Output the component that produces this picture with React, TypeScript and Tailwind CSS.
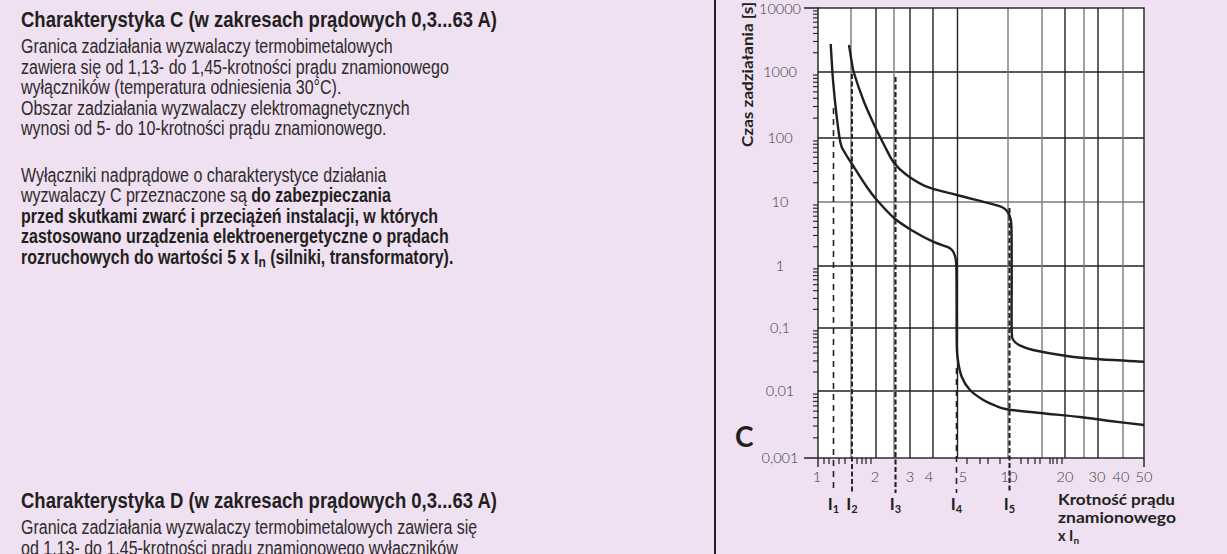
import React from "react";

type P = [number, number];

function smooth(pts: P[]): string {
  let d = `M${pts[0][0]},${pts[0][1]}`;
  for (let i = 0; i < pts.length - 1; i++) {
    const p0 = pts[i - 1] || pts[i];
    const p1 = pts[i];
    const p2 = pts[i + 1];
    const p3 = pts[i + 2] || p2;
    const c1x = p1[0] + (p2[0] - p0[0]) / 6;
    const c1y = p1[1] + (p2[1] - p0[1]) / 6;
    const c2x = p2[0] - (p3[0] - p1[0]) / 6;
    const c2y = p2[1] - (p3[1] - p1[1]) / 6;
    d += ` C${c1x.toFixed(2)},${c1y.toFixed(2)} ${c2x.toFixed(2)},${c2y.toFixed(2)} ${p2[0]},${p2[1]}`;
  }
  return d;
}

const X0 = 818;
const X1 = 1144;
const Y0 = 8;
const Y1 = 458;
const DECADES = [8, 72, 138, 202, 266, 328, 391, 458];
const YLABELS = ["10000", "1000", "100", "10", "1", "0,1", "0,01", "0,001"];
const INK = "#231f20";
const GRAY = "#7a7a7a";

const vGrid: { x: number; c: string }[] = [
  { x: 851, c: GRAY },
  { x: 876, c: INK },
  { x: 894, c: GRAY },
  { x: 910, c: INK },
  { x: 933, c: INK },
  { x: 957.5, c: INK },
  { x: 1008, c: GRAY },
  { x: 1042, c: GRAY },
  { x: 1065, c: INK },
  { x: 1084, c: GRAY },
  { x: 1098, c: INK },
  { x: 1123, c: GRAY },
];

const xTicks = [824, 829, 839, 845, 857, 862, 866, 871, 967, 980, 988, 1000, 1021, 1028, 1035, 1040, 1050, 1053, 1057, 1062];

const xLabels: [string, number][] = [
  ["1", 817],
  ["2", 875],
  ["3", 910],
  ["4", 929],
  ["5", 963],
  ["10", 1009],
  ["20", 1065],
  ["30", 1097],
  ["40", 1121],
  ["50", 1144],
];

const curveA: P[] = [
  [830.7, 44], [833, 80], [836.5, 115], [840.5, 143], [845, 153], [852, 164], [866.7, 186.7], [876, 199],
  [894, 218], [913, 231], [933, 241.7], [946.7, 246.7], [952, 250], [955, 256], [956.3, 266], [956.6, 300],
  [956.7, 340], [957.6, 358], [961.7, 376.7], [970, 390], [983.3, 400], [995, 405.5], [1006.7, 409.3],
  [1040, 413], [1080, 417], [1110, 421], [1144, 425],
];

const curveB: P[] = [
  [849, 45], [851.7, 61.7], [854, 73], [863.3, 100], [873.3, 123], [885, 146.7], [894.3, 163.3], [906.7, 175],
  [926.7, 186.7], [956.7, 195], [986.7, 202.7], [1001.7, 207], [1007, 211], [1010.3, 218], [1011.5, 230],
  [1011.7, 280], [1011.7, 330], [1013.3, 340], [1020, 345.5], [1033, 350], [1066.7, 356], [1100, 359.3], [1144, 361.7],
];

const dashes: { x: number; y: number; w: number; da: string; n: string }[] = [
  { x: 833.5, y: 108, w: 1.6, da: "6 5", n: "1" },
  { x: 852, y: 74, w: 1.9, da: "5 2.5", n: "2" },
  { x: 895.5, y: 77, w: 2.1, da: "5 2.5", n: "3" },
  { x: 956.5, y: 368, w: 1.6, da: "6 5", n: "4" },
  { x: 1009.5, y: 208, w: 2.1, da: "5 2.5", n: "5" },
];

const FONT = "Lato, 'DejaVu Sans', sans-serif";

function Chart() {
  const minorY: number[] = [];
  for (let i = 0; i < DECADES.length - 1; i++) {
    const top = DECADES[i];
    const bot = DECADES[i + 1];
    for (let m = 2; m <= 9; m++) minorY.push(bot - Math.log10(m) * (bot - top));
  }
  return (
    <svg width={511} height={554} viewBox="716 0 511 554" className="block shrink-0">
      <rect x={X0} y={Y0} width={X1 - X0} height={Y1 - Y0} fill="#ffffff" />
      {DECADES.slice(1, -1).map((y) => (
        <line key={"h" + y} x1={X0} x2={X1} y1={y} y2={y} stroke={y === 202 ? GRAY : INK} strokeWidth={1.3} />
      ))}
      {vGrid.map((g) => (
        <line key={"v" + g.x} x1={g.x} x2={g.x} y1={Y0} y2={Y1} stroke={g.c} strokeWidth={1.4} />
      ))}
      <rect x={X0} y={Y0} width={X1 - X0} height={Y1 - Y0} fill="none" stroke={INK} strokeWidth={1.4} />
      <line x1={804} x2={X0} y1={Y0} y2={Y0} stroke={INK} strokeWidth={1.5} />
      <line x1={804} x2={X0} y1={Y1} y2={Y1} stroke={INK} strokeWidth={1.5} />
      {minorY.map((y, i) => (
        <line key={"my" + i} x1={813} x2={X0} y1={y} y2={y} stroke={INK} strokeWidth={1.1} />
      ))}
      {xTicks.map((x) => (
        <line key={"xt" + x} x1={x} x2={x} y1={Y1} y2={464} stroke={INK} strokeWidth={1.2} />
      ))}
      <line x1={X0} x2={X0} y1={Y1} y2={467} stroke={INK} strokeWidth={1.4} />
      <line x1={X1} x2={X1} y1={Y1} y2={467} stroke={INK} strokeWidth={1.4} />
      {dashes.map((d) => (
        <line key={"d" + d.n} x1={d.x} x2={d.x} y1={d.y} y2={493} stroke={INK} strokeWidth={d.w} strokeDasharray={d.da} />
      ))}
      <path d={smooth(curveA)} fill="none" stroke={INK} strokeWidth={2.4} strokeLinejoin="round" />
      <path d={smooth(curveB)} fill="none" stroke={INK} strokeWidth={2.4} strokeLinejoin="round" />

      <g fontFamily={FONT} fontSize={14.5} fill="#3a3a3a" fontWeight={300}>
        {DECADES.map((y, i) => (
          <text key={"yl" + i} x={780} y={i === 0 ? 14 : y + 5} textAnchor="middle">
            {YLABELS[i]}
          </text>
        ))}
        {xLabels.map(([t, x]) => (
          <text key={"xl" + t} x={x} y={482} textAnchor="middle">
            {t}
          </text>
        ))}
      </g>

      <g fontFamily={FONT} fontWeight={700} fill={INK}>
        <text transform="translate(753,147) rotate(-90)" fontSize={16} textLength={145} lengthAdjust="spacingAndGlyphs">
          Czas zadziałania [s]
        </text>
        <text x={735} y={447} fontSize={28}>
          C
        </text>
        {dashes.map((d) => (
          <text key={"il" + d.n} x={d.x} y={510} fontSize={17} textAnchor="middle">
            I<tspan fontSize={11} dy={3}>{d.n}</tspan>
          </text>
        ))}
        <text x={1058} y={505} fontSize={14.5} textLength={117} lengthAdjust="spacingAndGlyphs">
          Krotność prądu
        </text>
        <text x={1058} y={523} fontSize={14.5} textLength={118} lengthAdjust="spacingAndGlyphs">
          znamionowego
        </text>
        <text x={1058} y={541} fontSize={14.5}>
          x I<tspan fontSize={10} dy={3}>n</tspan>
        </text>
      </g>
    </svg>
  );
}

export default function App() {
  return (
    <div className="w-[1227px] h-[554px] overflow-hidden bg-[#efe1f1] flex">
      <div className="w-[714px] shrink-0 pl-[21px] pt-[8px] text-[#231f20] font-['Liberation_Sans',Arial,sans-serif]">
        <div className="origin-top-left scale-x-[0.84] whitespace-nowrap text-[22px] font-bold leading-[24px]">
          Charakterystyka C (w zakresach prądowych 0,3...63 A)
        </div>
        <div className="mt-[4px] origin-top-left scale-x-[0.8] whitespace-nowrap text-[20px] leading-[20.5px] text-[#2e2a2b]">
          <div>Granica zadziałania wyzwalaczy termobimetalowych</div>
          <div>zawiera się od 1,13- do 1,45-krotności prądu znamionowego</div>
          <div>wyłączników (temperatura odniesienia 30°C).</div>
          <div>Obszar zadziałania wyzwalaczy elektromagnetycznych</div>
          <div>wynosi od 5- do 10-krotności prądu znamionowego.</div>
          <div className="mt-[26px]">Wyłączniki nadprądowe o charakterystyce działania</div>
          <div>
            wyzwalaczy C przeznaczone są <span className="font-bold text-[#231f20]">do zabezpieczania</span>
          </div>
          <div className="font-bold text-[#231f20]">przed skutkami zwarć i przeciążeń instalacji, w których</div>
          <div className="font-bold text-[#231f20]">zastosowano urządzenia elektroenergetyczne o prądach</div>
          <div className="font-bold text-[#231f20]">
            rozruchowych do wartości 5 x I<sub>n</sub> (silniki, transformatory).
          </div>
        </div>
        <div className="mt-[222px] origin-top-left scale-x-[0.84] whitespace-nowrap text-[22px] font-bold leading-[24px]">
          Charakterystyka D (w zakresach prądowych 0,3...63 A)
        </div>
        <div className="mt-[4px] origin-top-left scale-x-[0.8] whitespace-nowrap text-[20px] leading-[20.5px] text-[#2e2a2b]">
          <div>Granica zadziałania wyzwalaczy termobimetalowych zawiera się</div>
          <div>od 1,13- do 1,45-krotności prądu znamionowego wyłączników</div>
        </div>
      </div>
      <div className="w-[2px] shrink-0 bg-[#231f20]" />
      <Chart />
    </div>
  );
}
